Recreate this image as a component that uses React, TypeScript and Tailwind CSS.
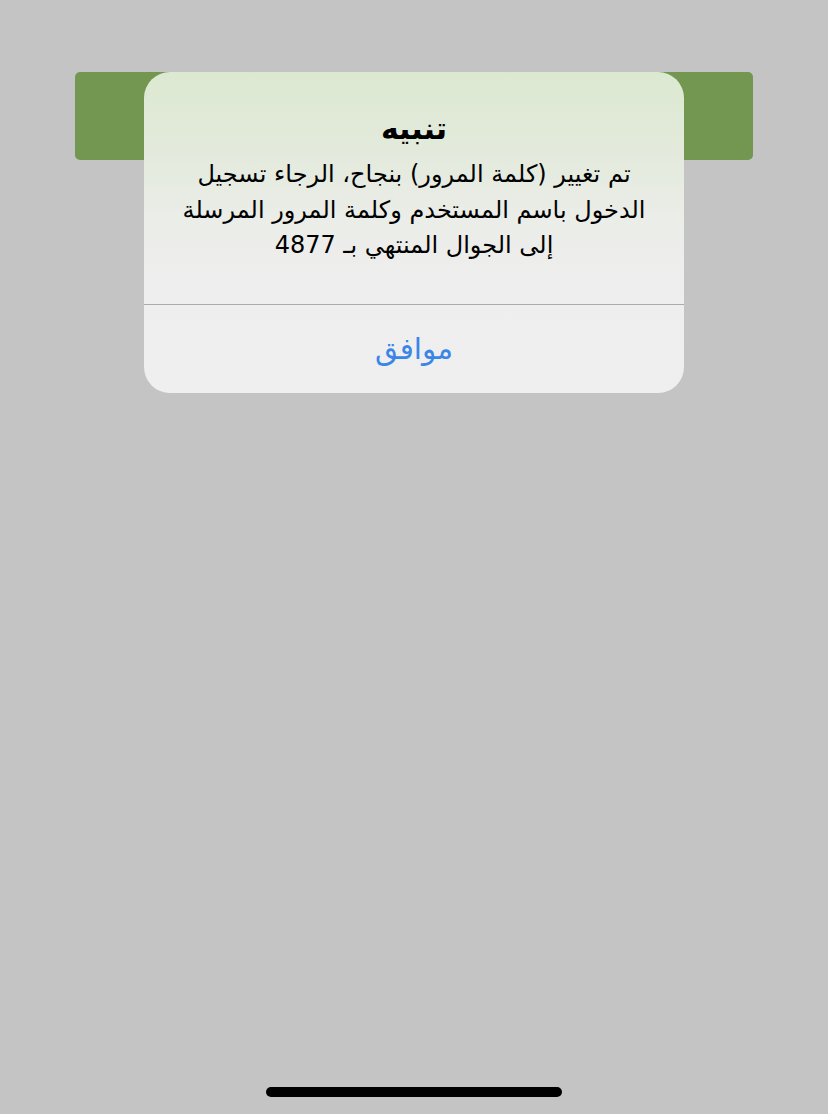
import React from "react";

export default function App() {
  const font = { fontFamily: '"DejaVu Sans", "Noto Sans", sans-serif' };
  return (
    <div className="relative w-[828px] h-[1114px] bg-[#c4c4c4] overflow-hidden" style={font}>
      <div className="pt-[72px] px-[75px]">
        <div className="h-[88px] w-[678px] rounded-[5px] bg-[#739650]" />
      </div>

      <div
        dir="rtl"
        className="absolute left-[144px] top-[72px] w-[540px] h-[321px] rounded-[26px] overflow-hidden bg-[linear-gradient(to_bottom,#dce9d1_0%,#e3eadc_25%,#ebede8_45%,#eeeeee_65%,#efefef_100%)] flex flex-col"
      >
        <div className="h-[232px] flex flex-col items-center pt-[37px] px-[28px] text-black">
          <div className="text-[30px] font-bold leading-[40px]">تنبيه</div>
          <div className="text-[24px] leading-[35.5px] text-center mt-[8px]">
            تم تغيير (كلمة المرور) بنجاح، الرجاء تسجيل الدخول باسم المستخدم وكلمة المرور المرسلة إلى الجوال المنتهي بـ 4877
          </div>
        </div>
        <div className="h-px bg-[#ababab]" />
        <div className="flex-1 flex items-center justify-center">
          <span className="text-[29.5px] leading-[40px] text-[#3a86e8]">موافق</span>
        </div>
      </div>

      <div className="absolute left-[266px] top-[1087px] w-[296px] h-[10px] rounded-full bg-black" />
    </div>
  );
}
